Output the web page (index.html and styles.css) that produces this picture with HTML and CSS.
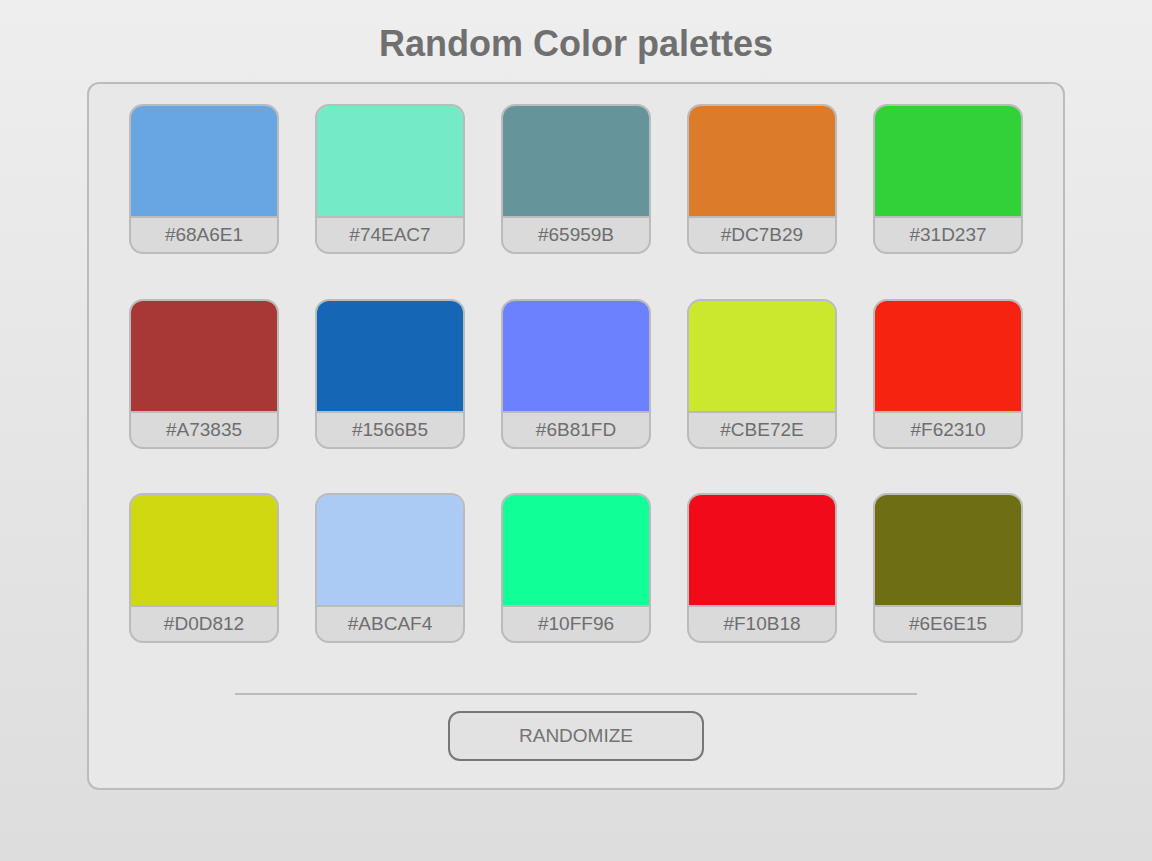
FILE: index.html
```html
<!DOCTYPE html>
<html lang="en">
<head>
<meta charset="utf-8">
<title>Random Color palettes</title>
<link rel="stylesheet" href="styles.css">
</head>
<body>
<h1 class="title">Random Color palettes</h1>
<main class="panel">
  <div class="grid">
    <div class="card"><div class="swatch" style="background:#68A6E1"></div><div class="label">#68A6E1</div></div>
    <div class="card"><div class="swatch" style="background:#74EAC7"></div><div class="label">#74EAC7</div></div>
    <div class="card"><div class="swatch" style="background:#65959B"></div><div class="label">#65959B</div></div>
    <div class="card"><div class="swatch" style="background:#DC7B29"></div><div class="label">#DC7B29</div></div>
    <div class="card"><div class="swatch" style="background:#31D237"></div><div class="label">#31D237</div></div>
    <div class="card"><div class="swatch" style="background:#A73835"></div><div class="label">#A73835</div></div>
    <div class="card"><div class="swatch" style="background:#1566B5"></div><div class="label">#1566B5</div></div>
    <div class="card"><div class="swatch" style="background:#6B81FD"></div><div class="label">#6B81FD</div></div>
    <div class="card"><div class="swatch" style="background:#CBE72E"></div><div class="label">#CBE72E</div></div>
    <div class="card"><div class="swatch" style="background:#F62310"></div><div class="label">#F62310</div></div>
    <div class="card"><div class="swatch" style="background:#D0D812"></div><div class="label">#D0D812</div></div>
    <div class="card"><div class="swatch" style="background:#ABCAF4"></div><div class="label">#ABCAF4</div></div>
    <div class="card"><div class="swatch" style="background:#10FF96"></div><div class="label">#10FF96</div></div>
    <div class="card"><div class="swatch" style="background:#F10B18"></div><div class="label">#F10B18</div></div>
    <div class="card"><div class="swatch" style="background:#6E6E15"></div><div class="label">#6E6E15</div></div>
  </div>
  <hr class="divider">
  <button class="btn" type="button">RANDOMIZE</button>
</main>
</body>
</html>
```

FILE: styles.css
```css
html {
  min-height: 100%;
  background: linear-gradient(#eeeeee, #dddddd);
}
body {
  margin: 0;
  min-height: 861px;
  font-family: "Liberation Sans", Arial, sans-serif;
  background: linear-gradient(#eeeeee, #dddddd);
  display: flex;
  flex-direction: column;
  align-items: center;
}
.title {
  margin: 23px 0 18px;
  font-size: 36px;
  line-height: 41px;
  font-weight: bold;
  color: #707070;
  text-align: center;
}
.panel {
  box-sizing: border-box;
  width: 978px;
  border: 2px solid #bcbcbc;
  border-radius: 12px;
  background: #e8e8e8;
  padding: 20px 0 27px;
  display: flex;
  flex-direction: column;
  align-items: center;
}
.grid {
  display: grid;
  grid-template-columns: repeat(5, 150px);
  column-gap: 36px;
  row-gap: 44.5px;
}
.card {
  box-sizing: border-box;
  width: 150px;
  height: 150px;
  border: 2px solid #bbbbbb;
  border-radius: 14px;
  overflow: hidden;
  display: flex;
  flex-direction: column;
  background: #dadada;
}
.swatch {
  height: 110px;
  border-bottom: 2px solid #bbbbbb;
}
.label {
  flex: 1;
  display: flex;
  align-items: center;
  justify-content: center;
  font-size: 19px;
  color: #6e6e6e;
}
.divider {
  width: 682px;
  height: 0;
  border: none;
  border-top: 2px solid #bbbbbb;
  margin: 50px 0 16px;
}
.btn {
  box-sizing: border-box;
  width: 256px;
  height: 50px;
  border: 2px solid #777777;
  border-radius: 12px;
  background: #e2e2e2;
  font-family: "Liberation Sans", Arial, sans-serif;
  font-size: 19px;
  color: #737373;
  padding: 0;
  cursor: pointer;
}
```
